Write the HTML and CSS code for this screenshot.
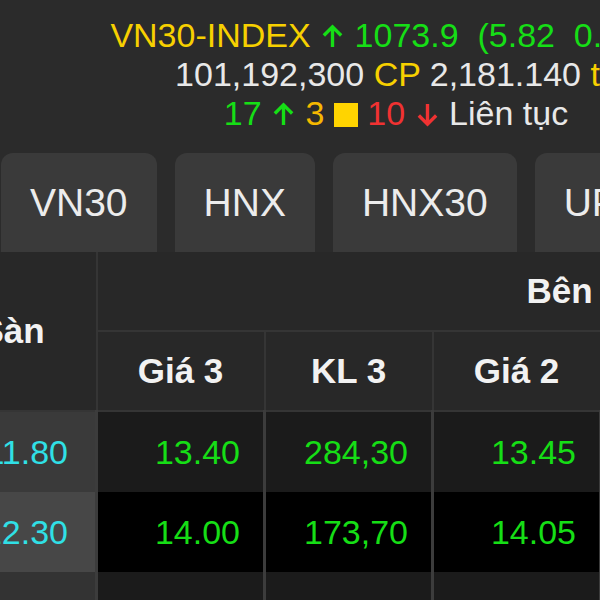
FILE: index.html
```html
<!DOCTYPE html>
<html lang="vi">
<head>
    <meta charset="UTF-8">
    <meta name="viewport" content="width=device-width, initial-scale=1.0">
    <title>Bảng giá VN30</title>
    <link rel="stylesheet" href="styles.css">
</head>
<body>
    <div class="summary">
        <div class="line">
            <span class="yellow">VN30-INDEX</span>
            <svg class="arrow up" viewBox="0 0 26 26"><path d="M13 24V3M4 12l9-9 9 9"/></svg>
            <span class="green">1073.9&nbsp;&nbsp;(5.82&nbsp;&nbsp;0.55%)</span>
        </div>
        <div class="line">
            <span class="white">101,192,300</span>
            <span class="yellow">CP</span>
            <span class="white">2,181.140</span>
            <span class="yellow">tỷ</span>
        </div>
        <div class="line">
            <span class="green">17</span>
            <svg class="arrow up" viewBox="0 0 26 26"><path d="M13 24V3M4 12l9-9 9 9"/></svg>
            <span class="orange">3</span>
            <span class="square"></span>
            <span class="red">10</span>
            <svg class="arrow down" viewBox="0 0 26 26"><path d="M13 2v21M4 14l9 9 9-9"/></svg>
            <span class="white">Liên tục</span>
        </div>
    </div>

    <div class="tabs">
        <div class="tab">VN30</div>
        <div class="tab">HNX</div>
        <div class="tab">HNX30</div>
        <div class="tab">UPCOM</div>
    </div>

    <table class="board">
        <colgroup>
            <col><col><col><col><col><col><col>
        </colgroup>
        <thead>
            <tr>
                <th rowspan="2">Sàn</th>
                <th colspan="6" class="group">Bên mua</th>
            </tr>
            <tr>
                <th>Giá 3</th>
                <th>KL 3</th>
                <th>Giá 2</th>
                <th>KL 2</th>
                <th>Giá 1</th>
                <th>KL 1</th>
            </tr>
        </thead>
        <tbody>
            <tr>
                <td class="floor">11.80</td>
                <td>13.40</td>
                <td>284,30</td>
                <td>13.45</td>
                <td>112,50</td>
                <td>13.50</td>
                <td>95,20</td>
            </tr>
            <tr>
                <td class="floor">12.30</td>
                <td>14.00</td>
                <td>173,70</td>
                <td>14.05</td>
                <td>64,10</td>
                <td>14.10</td>
                <td>120,40</td>
            </tr>
            <tr>
                <td class="floor">15.45</td>
                <td>16.90</td>
                <td>48,60</td>
                <td>16.95</td>
                <td>72,30</td>
                <td>17.00</td>
                <td>210,80</td>
            </tr>
        </tbody>
    </table>
</body>
</html>
```

FILE: styles.css
```css
body {
    margin: 0;
    background: #2b2b2b;
    font-family: 'Liberation Sans', Arial, sans-serif;
    overflow: hidden;
    width: 600px;
    height: 600px;
}
.summary {
    width: 792px;
    padding-top: 16px;
    text-align: center;
    font-size: 34px;
    line-height: 39px;
    white-space: nowrap;
}
.yellow {
    color: #f7d000;
}
.orange {
    color: #f5b800;
}
.green {
    color: #16de16;
}
.red {
    color: #f03232;
}
.white {
    color: #e8e8e8;
}
.arrow {
    width: 25px;
    height: 25px;
    vertical-align: -2px;
    fill: none;
    stroke-width: 3.5;
}
.arrow.up {
    stroke: #16de16;
}
.arrow.down {
    stroke: #f03232;
}
.square {
    display: inline-block;
    width: 24px;
    height: 24px;
    background: #ffd400;
    vertical-align: -2px;
}
.tabs {
    display: flex;
    gap: 18px;
    margin-top: 20px;
    padding-left: 1px;
    white-space: nowrap;
}
.tab {
    flex-shrink: 0;
    height: 99px;
    padding: 0 29px;
    display: flex;
    align-items: center;
    background: #3a3a3a;
    border-radius: 12px 12px 0 0;
    color: #ececec;
    font-size: 39px;
}
.board {
    margin-left: -73px;
    table-layout: fixed;
    width: 1176px;
    border-collapse: collapse;
    font-size: 34px;
}
.board col {
    width: 168px;
}
.board th {
    height: 78px;
    padding: 0;
    background: #282828;
    color: #f2f2f2;
    font-size: 35px;
    font-weight: bold;
    border: 2px solid #353535;
    border-top: none;
}
.board th.group {
    text-align: center;
}
.board td {
    height: 80px;
    padding: 0 23px 0 0;
    text-align: right;
    color: #16de16;
    background: #1b1b1b;
    border-left: 3px solid #3c3c3c;
    border-right: 3px solid #3c3c3c;
}
.board tbody tr:nth-child(2) td {
    background: #000;
}
.board td.floor {
    color: #30e0e6;
    background: #3a3a3a;
    padding-right: 27px;
}
.board tbody tr:nth-child(2) td.floor {
    background: #474747;
}
.board tbody tr:nth-child(3) td.floor {
    background: #333;
}
```
